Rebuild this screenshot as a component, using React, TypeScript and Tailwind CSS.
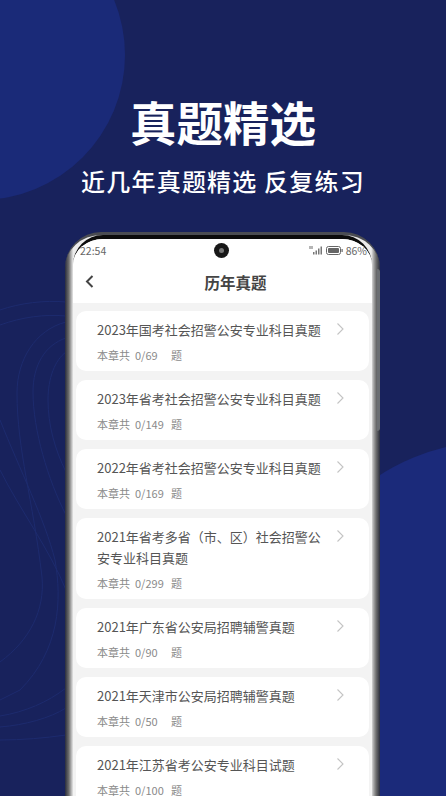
import React from "react";

const items = [
  { t: "2023年国考社会招警公安专业科目真题", s: "0/69" },
  { t: "2023年省考社会招警公安专业科目真题", s: "0/149" },
  { t: "2022年省考社会招警公安专业科目真题", s: "0/169" },
  { t: "2021年省考多省（市、区）社会招警公安专业科目真题", s: "0/299" },
  { t: "2021年广东省公安局招聘辅警真题", s: "0/90" },
  { t: "2021年天津市公安局招聘辅警真题", s: "0/50" },
  { t: "2021年江苏省考公安专业科目试题", s: "0/100" },
];

function Waves() {
  const paths = [
    "M0 310C20 303 45 300 66 302",
    "M0 325C22 317 45 314 66 316",
    "M66 322C35 330 17 360 17 393C17 450 33 500 42 577C45 610 30 640 0 662",
    "M66 338C45 345 33 365 33 392C33 430 48 480 66 515",
    "M66 352C55 360 48 378 48 400C48 425 55 450 66 472",
    "M0 420C20 470 45 520 55 560C62 600 60 650 20 690L0 700",
    "M0 470C20 510 50 550 66 590",
    "M0 716C25 712 48 702 66 688",
    "M0 727C25 725 50 718 66 708",
    "M0 740C22 740 45 738 66 735",
  ];
  return (
    <svg className="absolute left-0 top-0" width="66" height="796" fill="none">
      {paths.map((d, i) => (
        <path key={i} d={d} stroke="#1d2b6e" strokeWidth="1" />
      ))}
    </svg>
  );
}

function Card({ t, s }: { t: string; s: string }) {
  return (
    <div className="flex rounded-[10px] bg-white pl-[21px] pr-[24px] pt-[8px] pb-[8px]">
      <div className="flex-1 min-w-0">
        <div className="text-[13px] leading-[21px] text-[#555555] w-[226px]">{t}</div>
        <div className="mt-[7px] flex text-[11px] leading-[16px] text-[#8a8a8a]">
          <span>本章共</span>
          <span className="ml-[5px] w-[36px]">{s}</span>
          <span>题</span>
        </div>
      </div>
      <svg className="mt-[3px] shrink-0" width="9" height="14" viewBox="0 0 9 14" fill="none">
        <path d="M1.5 1.5L7 7L1.5 12.5" stroke="#c4c4c4" strokeWidth="1.1" />
      </svg>
    </div>
  );
}

export default function App() {
  return (
    <div
      className="relative h-[796px] w-[446px] overflow-hidden bg-[#18225c] text-center"
      style={{ fontFamily: '"Noto Sans CJK SC", sans-serif' }}
    >
      <div className="absolute left-[-165px] top-[-90px] h-[290px] w-[290px] rounded-full bg-[#1a2a78]" />
      <div className="absolute left-[279px] top-[441px] h-[436px] w-[436px] rounded-full bg-[#1b2a7a]" />
      <Waves />

      <div className="relative pt-[89px]">
        <h1 className="text-[46.5px] font-bold leading-[64px] text-white">真题精选</h1>
        <p className="mt-[10px] text-[24px] font-medium leading-[36px] tracking-[1.2px] text-white">近几年真题精选 反复练习</p>

        <div className="absolute right-[66px] top-[269px] h-[162px] w-[3px] rounded-r bg-[#6b6e72]" />
        <div className="ml-[65px] mt-[33px] h-[600px] w-[315px] rounded-t-[36px] border-t-[3px] border-[#4a4c52] bg-[linear-gradient(90deg,#2a2d3c_0%,#6d6d6d_1.2%,#b5b5b5_2%,#ececec_2.6%,#ececec_97.2%,#a5a5a5_98%,#6d6d6d_98.8%,#2a2d3c_100%)] px-[8px]">
          <div className="h-full overflow-hidden rounded-t-[30px] border-t-[4px] border-[#0c0c0c] bg-[#f3f3f3]">
            <div className="relative flex h-[23px] items-center justify-between bg-white pl-[7px] pr-[5px] text-[10.5px] text-[#666666]">
              <span>22:54</span>
              <span className="absolute left-[141px] top-[4px] flex h-[15px] w-[15px] items-center justify-center rounded-full bg-[#181818]">
                <span className="h-[5px] w-[5px] rounded-full bg-[#777777]" />
              </span>
              <span className="flex items-center gap-[3px]">
                <svg width="15" height="9" viewBox="0 0 15 9">
                  <path d="M5 8.5H6.5V6H5ZM7.5 8.5H9V4.5H7.5ZM10 8.5H11.5V2.5H10ZM12.5 8.5H14V0.5H12.5Z" fill="#777777" />
                  <path d="M1 0H5V3H1Z" fill="#b5b5b5" />
                </svg>
                <svg width="17" height="9" viewBox="0 0 17 9" fill="none">
                  <rect x="0.5" y="0.5" width="14" height="8" rx="2" stroke="#666666" />
                  <rect x="2" y="2" width="11" height="5" rx="1" fill="#666666" />
                  <rect x="15.5" y="3" width="1.2" height="3" fill="#666666" />
                </svg>
                <span>86%</span>
              </span>
            </div>
            <div className="relative flex h-[41px] items-center justify-center bg-white pl-[26px]">
              <svg className="absolute left-[11px] top-[12px]" width="11" height="15" viewBox="0 0 11 15" fill="none">
                <path d="M8.5 2L3 7.5L8.5 13" stroke="#444444" strokeWidth="2" />
              </svg>
              <span className="text-[15.5px] font-bold text-[#444444]">历年真题</span>
            </div>
            <div className="flex flex-col gap-[9px] px-[3px] pt-[8px] text-left">
              {items.map((it) => (
                <Card key={it.t} t={it.t} s={it.s} />
              ))}
            </div>
          </div>
        </div>
      </div>
    </div>
  );
}
